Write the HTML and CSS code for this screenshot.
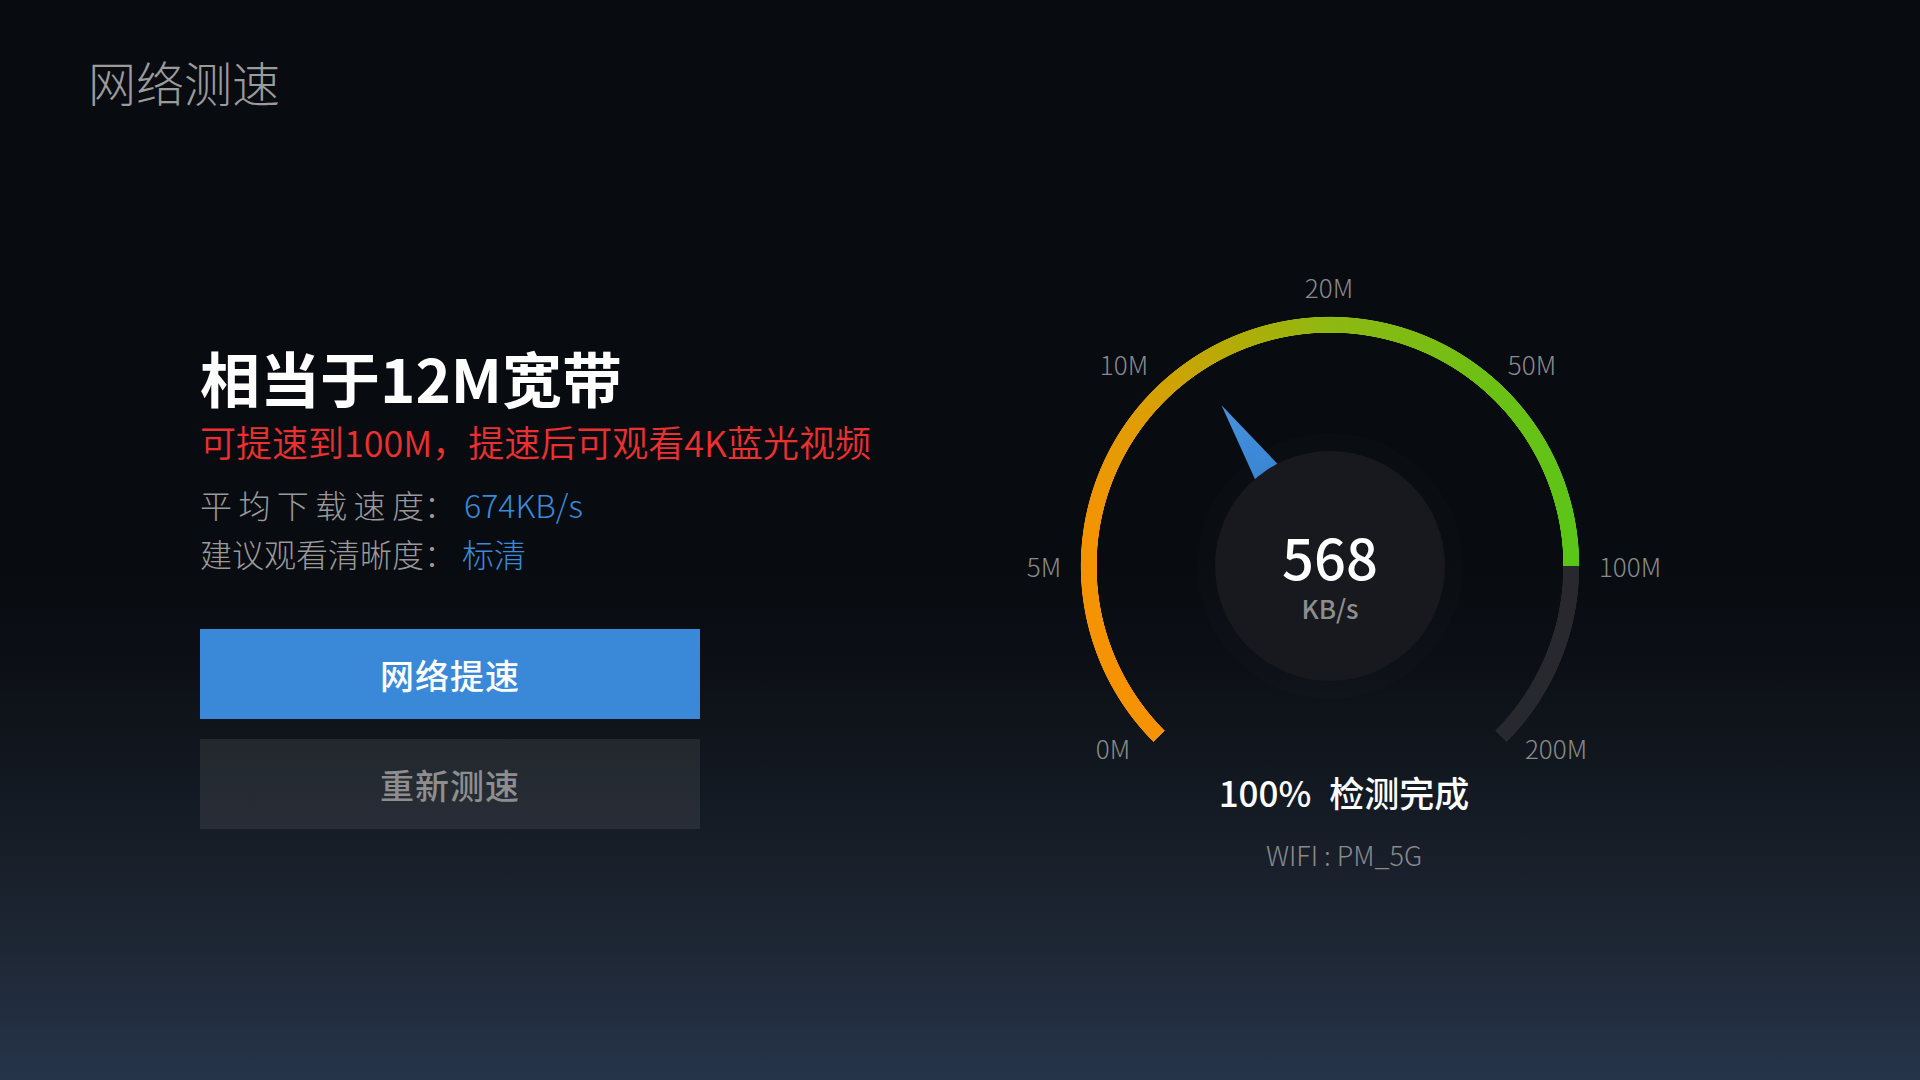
FILE: index.html
```html
<!DOCTYPE html>
<html lang="zh-CN">
<head>
<meta charset="utf-8">
<title>网络测速</title>
<link rel="stylesheet" href="styles.css">
</head>
<body>
<div class="screen">
  <header class="header">
    <h1 class="title">网络测速</h1>
  </header>
  <main class="main">
    <section class="summary">
      <h2 class="headline">相当于12M宽带</h2>
      <p class="promo">可提速到100M，提速后可观看4K蓝光视频</p>
      <p class="stat"><span class="label spaced">平均下载速度</span><span class="colon">：</span><span class="value v1">674KB/s</span></p>
      <p class="stat"><span class="label">建议观看清晰度</span><span class="colon">：</span><span class="value v2">标清</span></p>
      <div class="actions">
        <button class="btn btn-primary">网络提速</button>
        <button class="btn btn-secondary">重新测速</button>
      </div>
    </section>
    <section class="meter">
      <div class="gauge">
        <div class="ring"></div>
        <svg class="needle" width="500" height="500" viewBox="0 0 500 500">
          <defs>
            <linearGradient id="ng" x1="0" y1="0" x2="0" y2="1">
              <stop offset="0" stop-color="#4a94de"/>
              <stop offset="1" stop-color="#3582d2"/>
            </linearGradient>
          </defs>
          <g transform="rotate(-34 250 250)">
            <polygon points="250,56 266,150 234,150" fill="url(#ng)"/>
          </g>
        </svg>
        <div class="dial">
          <span class="speed">568</span>
          <span class="unit">KB/s</span>
        </div>
        <span class="tick t0">0M</span>
        <span class="tick t5">5M</span>
        <span class="tick t10">10M</span>
        <span class="tick t20">20M</span>
        <span class="tick t50">50M</span>
        <span class="tick t100">100M</span>
        <span class="tick t200">200M</span>
      </div>
      <div class="status">
        <p class="done"><span class="pct">100%</span>检测完成</p>
        <p class="wifi">WIFI : PM_5G</p>
      </div>
    </section>
  </main>
</div>
</body>
</html>
```

FILE: styles.css
```css
* { box-sizing: border-box; }
html, body { margin: 0; padding: 0; }
body {
  width: 1920px;
  height: 1080px;
  overflow: hidden;
  font-family: "Noto Sans CJK SC", "Noto Sans", sans-serif;
  background: linear-gradient(to bottom, #080b10 0%, #080b10 52%, #0c1016 62%, #141a23 74%, #1d2633 87%, #26344a 100%);
}
.screen { width: 1920px; height: 1080px; display: flex; flex-direction: column; }
.header { padding: 49px 0 0 88px; height: 115px; }
.title {
  margin: 0;
  font-size: 48px;
  line-height: 64px;
  font-weight: 300;
  color: #9b9b9b;
}
.main { display: flex; padding-left: 200px; }
.summary { width: 500px; margin-top: 226px; }
.headline {
  margin: 0;
  font-size: 60px;
  line-height: 72px;
  font-weight: 700;
  color: #ffffff;
}
.promo {
  margin: 4px 0 0;
  font-size: 36px;
  line-height: 48px;
  font-weight: 350;
  color: #ec3030;
  white-space: nowrap;
}
.stat {
  margin: 0;
  font-size: 32px;
  line-height: 49px;
  font-weight: 300;
  color: #9a9a9a;
  white-space: nowrap;
}
.promo + .stat { margin-top: 15px; }
.label { display: inline-block; width: 224px; }
.label.spaced { text-align: justify; text-align-last: justify; text-justify: inter-character; }
.value { color: #3a8ad8; }
.v1 { margin-left: 8px; }
.v2 { margin-left: 6px; }
.actions { margin-top: 51px; display: flex; flex-direction: column; gap: 20px; }
.btn {
  width: 500px;
  height: 90px;
  border: 0;
  padding: 0;
  font-family: inherit;
  font-size: 34px;
  font-weight: 500;
  letter-spacing: 1px;
}
.btn-primary { background: #3a89d8; color: #ffffff; }
.btn-secondary { background: rgba(255,255,255,0.08); color: #8e8e8e; }

.meter { margin-left: 380px; margin-top: 201px; width: 500px; }
.gauge { position: relative; width: 500px; height: 450px; }
.ring {
  position: absolute;
  left: 0; top: 0;
  width: 500px; height: 500px;
  border-radius: 50%;
  background: conic-gradient(from -135deg,
    #f69200 0deg,
    #f39300 55deg,
    #dc9e00 85deg,
    #b6ab06 110deg,
    #8fb812 135deg,
    #6dc014 175deg,
    #58c618 225deg,
    #28292e 225deg,
    #28292e 270deg,
    transparent 270deg);
  -webkit-mask: radial-gradient(circle closest-side, transparent 233px, #000 233.5px, #000 249px, transparent 249.6px);
  mask: radial-gradient(circle closest-side, transparent 233px, #000 233.5px, #000 249px, transparent 249.6px);
}
.needle { position: absolute; left: 0; top: 0; }
.dial {
  position: absolute;
  left: 135px; top: 135px;
  width: 230px; height: 230px;
  border-radius: 50%;
  background: #17191e;
  box-shadow: 0 0 0 18px rgba(255,255,255,0.012);
  display: flex;
  flex-direction: column;
  align-items: center;
  justify-content: center;
  padding-top: 26px;
}
.speed {
  font-size: 56px;
  line-height: 56px;
  font-weight: 500;
  color: #ffffff;
}
.unit {
  margin-top: 2px;
  font-size: 26px;
  line-height: 44px;
  font-weight: 500;
  color: #8e8e8e;
}
.tick {
  position: absolute;
  transform: translate(-50%, -50%);
  font-size: 26px;
  line-height: 32px;
  font-weight: 300;
  color: #8a8a8a;
  white-space: nowrap;
}
.t0 { left: 33px; top: 432px; }
.t5 { left: -36px; top: 250px; }
.t10 { left: 44px; top: 48px; }
.t20 { left: 249px; top: -29px; }
.t50 { left: 452px; top: 48px; }
.t100 { left: 550px; top: 250px; }
.t200 { left: 476px; top: 432px; }

.status { padding-left: 28px; text-align: center; margin-top: 2px; }
.done {
  margin: 0;
  font-size: 35px;
  line-height: 48px;
  font-weight: 500;
  color: #ffffff;
}
.pct { margin-right: 18px; }
.wifi {
  margin: 19px 0 0;
  font-size: 27px;
  line-height: 40px;
  font-weight: 300;
  color: #8a8a8a;
}
```
